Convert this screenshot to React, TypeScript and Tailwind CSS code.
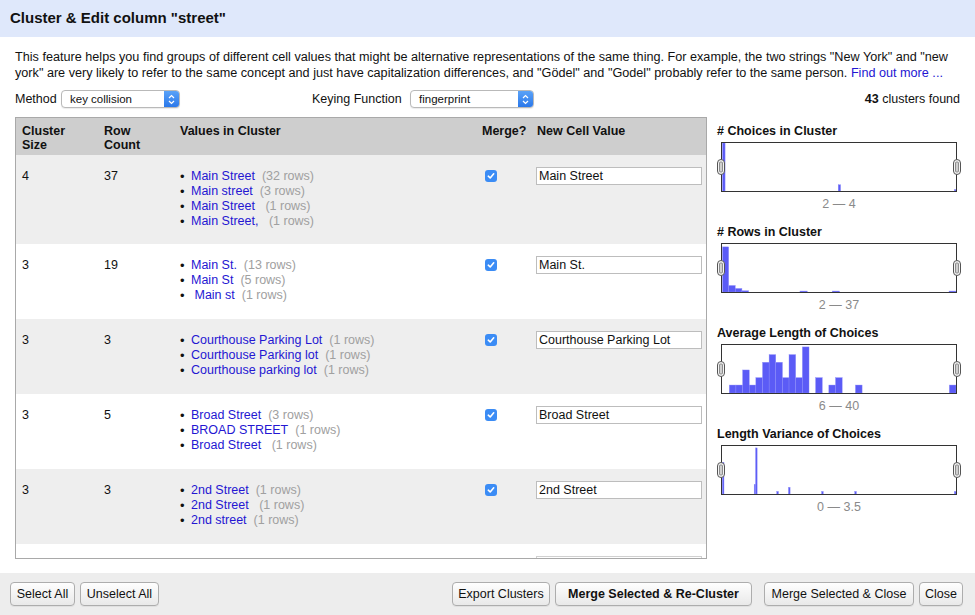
import React from "react";

type Cluster = {
  size: number;
  count: number;
  values: [string, string][];
  newValue: string;
};

const clusters: Cluster[] = [
  {
    size: 4,
    count: 37,
    values: [
      ["Main Street", "(32 rows)"],
      ["Main street", "(3 rows)"],
      ["Main Street ", "(1 rows)"],
      ["Main Street, ", "(1 rows)"],
    ],
    newValue: "Main Street",
  },
  {
    size: 3,
    count: 19,
    values: [
      ["Main St.", "(13 rows)"],
      ["Main St", "(5 rows)"],
      [" Main st", "(1 rows)"],
    ],
    newValue: "Main St.",
  },
  {
    size: 3,
    count: 3,
    values: [
      ["Courthouse Parking Lot", "(1 rows)"],
      ["Courthouse Parking lot", "(1 rows)"],
      ["Courthouse parking lot", "(1 rows)"],
    ],
    newValue: "Courthouse Parking Lot",
  },
  {
    size: 3,
    count: 5,
    values: [
      ["Broad Street", "(3 rows)"],
      ["BROAD STREET", "(1 rows)"],
      ["Broad Street ", "(1 rows)"],
    ],
    newValue: "Broad Street",
  },
  {
    size: 3,
    count: 3,
    values: [
      ["2nd Street", "(1 rows)"],
      ["2nd Street ", "(1 rows)"],
      ["2nd street", "(1 rows)"],
    ],
    newValue: "2nd Street",
  },
];

// bars: [x, width, height] inside a 235 x 50 box
type Bar = [number, number, number];

const histograms: { title: string; range: string; bars: Bar[] }[] = [
  {
    title: "# Choices in Cluster",
    range: "2 \u2014 4",
    bars: [
      [0.5, 2.6, 50],
      [116.7, 2.4, 6.5],
      [233.3, 1.7, 1.5],
    ],
  },
  {
    title: "# Rows in Cluster",
    range: "2 \u2014 37",
    bars: [
      [0.5, 6.2, 47],
      [6.7, 6.6, 6.8],
      [13.3, 6.7, 3.7],
      [20, 6.7, 1.3],
      [78.3, 7.3, 1],
      [110.7, 7.3, 1],
      [228, 7, 1],
    ],
  },
  {
    title: "Average Length of Choices",
    range: "6 \u2014 40",
    bars: [
      [7.3, 6.7, 8.3],
      [14, 6.7, 8.3],
      [20.7, 6.7, 24],
      [27.3, 6.7, 8.3],
      [34, 6.7, 16],
      [40.7, 6.7, 32],
      [47.3, 6.7, 40],
      [54, 6.7, 32],
      [60.7, 6.7, 16],
      [67.3, 6.7, 40],
      [74, 6.7, 16],
      [80.7, 6.7, 48],
      [94, 6.7, 16],
      [107.3, 6.7, 8.3],
      [114, 6.7, 16],
      [134, 6.7, 8.3],
      [228.3, 6.7, 8.3],
    ],
  },
  {
    title: "Length Variance of Choices",
    range: "0 \u2014 3.5",
    bars: [
      [0.3, 1.7, 33],
      [32.3, 1.4, 10],
      [33.7, 1.6, 48],
      [55, 1.7, 2.7],
      [66.7, 1.7, 7],
      [100, 1.7, 2.7],
      [133.3, 1.7, 2.7],
      [233.3, 1.7, 2.7],
    ],
  },
];

const Handle = () => (
  <svg width="8" height="16" viewBox="0 0 8 16">
    <rect x="0.5" y="0.5" width="7" height="15" rx="3.5" fill="#f4f4f4" stroke="#555" />
    <rect x="2.5" y="3" width="3" height="10" rx="1" fill="#cfcfcf" stroke="#777" strokeWidth="0.8" />
  </svg>
);

const SelectBox = ({ label, width }: { label: string; width: string }) => (
  <div
    className={`${width} h-[18px] flex items-stretch rounded-[4px] border border-[#b9b9b9] bg-white shadow-[0_1px_1px_rgba(0,0,0,0.08)] overflow-hidden`}
  >
    <div className="flex-1 pl-[8px] text-[11.5px] leading-[16px] text-[#111]">{label}</div>
    <div className="w-[15px] bg-gradient-to-b from-[#5aa2f8] to-[#2a78ea] flex items-center justify-center">
      <svg width="7" height="11" viewBox="0 0 7 11">
        <path d="M1 4 L3.5 1.5 L6 4" fill="none" stroke="#fff" strokeWidth="1.2" />
        <path d="M1 7 L3.5 9.5 L6 7" fill="none" stroke="#fff" strokeWidth="1.2" />
      </svg>
    </div>
  </div>
);

const Button = ({
  children,
  width,
  bold,
}: {
  children: React.ReactNode;
  width: string;
  bold?: boolean;
}) => (
  <button
    className={`${width} h-[24px] rounded-[4px] border border-[#adadad] bg-gradient-to-b from-[#fefefe] to-[#e9e9e9] text-[12.5px] text-[#111] shadow-[0_1px_0_rgba(0,0,0,0.05)] ${
      bold ? "font-bold" : ""
    }`}
  >
    {children}
  </button>
);

const CheckBox = () => (
  <div className="w-[12px] h-[12px] rounded-[3px] bg-[#3b8cf5] flex items-center justify-center">
    <svg width="8" height="8" viewBox="0 0 8 8">
      <path d="M1.3 4.2 L3.2 6 L6.7 1.8" fill="none" stroke="#fff" strokeWidth="1.6" strokeLinecap="round" strokeLinejoin="round" />
    </svg>
  </div>
);

export default function App() {
  return (
    <div className="w-[975px] h-[615px] flex flex-col bg-white overflow-hidden font-['Liberation_Sans',Arial,sans-serif] text-[#111]">
      {/* Title bar */}
      <div className="h-[37px] bg-[#dfe8fb] flex items-center px-[10px] shrink-0">
        <h1 className="text-[15px] font-bold text-[#111]">Cluster &amp; Edit column "street"</h1>
      </div>

      <div className="px-[15px] pt-[12px]">
        {/* Description */}
        <p className="text-[12.65px] leading-[16px] whitespace-nowrap">
          This feature helps you find groups of different cell values that might be alternative representations of the
          same thing. For example, the two strings "New York" and "new
          <br />
          york" are very likely to refer to the same concept and just have capitalization differences, and "Gödel" and
          "Godel" probably refer to the same person.{" "}
          <a className="text-[#2416d2]">Find out more ...</a>
        </p>

        {/* Method row */}
        <div className="mt-[9px] h-[18px] flex items-center text-[12.5px]">
          <span className="w-[46px]">Method</span>
          <SelectBox label="key collision" width="w-[119px]" />
          <span className="ml-[132px] w-[98px]">Keying Function</span>
          <SelectBox label="fingerprint" width="w-[124px]" />
          <span className="ml-auto">
            <b>43</b> clusters found
          </span>
        </div>

        {/* Main area */}
        <div className="mt-[9px] flex">
          {/* Table */}
          <div className="w-[692px] h-[442px] border border-[#a9a9a9] overflow-hidden shrink-0">
            <div className="h-[37px] bg-[#cecece] flex text-[12.5px] font-bold leading-[14px] pt-[6px]">
              <div className="w-[81px] pl-[6px]">
                Cluster
                <br />
                Size
              </div>
              <div className="w-[76px] pl-[7px]">
                Row
                <br />
                Count
              </div>
              <div className="w-[302px] pl-[7px]">Values in Cluster</div>
              <div className="w-[55px] pl-[7px]">Merge?</div>
              <div className="flex-1 pl-[7px]">New Cell Value</div>
            </div>
            {clusters.map((c, i) => (
              <div
                key={i}
                className={`flex text-[12.5px] leading-[15px] pt-[14px] ${i === 0 ? "pb-[15px]" : "pb-[16px]"} ${
                  i % 2 === 0 ? "bg-[#eeeeee]" : "bg-white"
                }`}
              >
                <div className="w-[81px] pl-[6px]">{c.size}</div>
                <div className="w-[76px] pl-[7px]">{c.count}</div>
                <div className="w-[302px] pl-[7px]">
                  {c.values.map(([v, r], j) => (
                    <div key={j} className="flex whitespace-pre">
                      <span className="w-[11px] text-[13px]">&#8226;</span>
                      <span className="text-[#2416d2]">{v}</span>
                      <span className="ml-[7px] text-[#a0a0a0]">{r}</span>
                    </div>
                  ))}
                </div>
                <div className="w-[55px] pl-[10px] pt-[1px]">
                  <CheckBox />
                </div>
                <div className="flex-1 pl-[6px] -mt-[2px]">
                  <div className="w-[166px] h-[18px] border border-[#bdbdbd] bg-white px-[2px] leading-[16px] text-[12.5px]">
                    {c.newValue}
                  </div>
                </div>
              </div>
            ))}
            {/* next row, scrolled mostly out of view */}
            <div className="flex pt-[12px] h-[40px]">
              <div className="w-[520px]" />
              <div className="w-[166px] h-[18px] border border-[#d0d0d0] bg-white" />
            </div>
          </div>

          {/* Facets */}
          <div className="ml-[10px] pt-[7px] flex-1">
            {histograms.map((h, i) => (
              <div key={i} className="mb-[13px]">
                <div className="h-[15px] leading-[15px] text-[12.5px] font-bold">{h.title}</div>
                <div className="relative ml-[4px] mt-[3px] w-[236px] h-[50px] border border-[#333] bg-white">
                  <svg className="absolute inset-0" width="234" height="48" viewBox="0 0 235 50" preserveAspectRatio="none">
                    {h.bars.map(([x, w, ht], k) => (
                      <rect
                        key={k}
                        x={x}
                        y={50 - ht}
                        width={w}
                        height={ht}
                        fill="#5b5bf6"
                        stroke="#8f8ff9"
                        strokeWidth="0.4"
                      />
                    ))}
                  </svg>
                  <div className="absolute left-[-5px] top-[16px]">
                    <Handle />
                  </div>
                  <div className="absolute right-[-5px] top-[16px]">
                    <Handle />
                  </div>
                </div>
                <div className="ml-[4px] w-[236px] mt-[5px] text-center text-[12.5px] leading-[15px] text-[#8a8a8a]">
                  {h.range}
                </div>
              </div>
            ))}
          </div>
        </div>
      </div>

      <div className="flex-1" />

      {/* Footer */}
      <div className="h-[42px] bg-[#ededed] flex items-center pl-[10px] pr-[12px] gap-[5px] shrink-0">
        <Button width="w-[65px]">Select All</Button>
        <Button width="w-[79px]">Unselect All</Button>
        <div className="flex-1" />
        <Button width="w-[98px]">Export Clusters</Button>
        <Button width="w-[197px]" bold>
          Merge Selected &amp; Re-Cluster
        </Button>
        <div className="w-[2px]" />
        <Button width="w-[150px]">Merge Selected &amp; Close</Button>
        <Button width="w-[44px]">Close</Button>
      </div>
    </div>
  );
}
